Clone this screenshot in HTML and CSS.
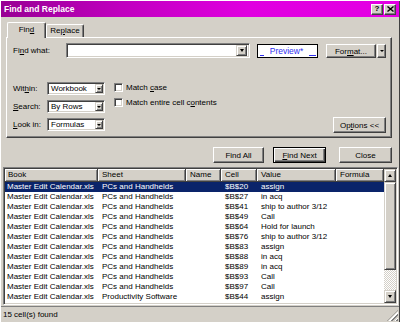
FILE: index.html
```html
<!DOCTYPE html>
<html>
<head>
<meta charset="utf-8">
<link rel="stylesheet" href="styles.css">
</head>
<body>
<div class="dialog">
  <div class="titlebar">
    <span class="title">Find and Replace</span>
    <span class="tb-btn help">?</span>
    <span class="tb-btn close"><svg width="7" height="6" viewBox="0 0 7 6"><path d="M0.5 0.5 L6.5 5.5 M6.5 0.5 L0.5 5.5" stroke="#000" stroke-width="1.4" fill="none"/></svg></span>
  </div>

  <div class="tabs">
    <div class="tab active">Fin<u>d</u></div>
    <div class="tab">Re<u>p</u>lace</div>
  </div>

  <div class="panel">
    <div class="row-what">
      <span class="lbl-what">Fi<u>n</u>d what:</span>
      <div class="combo combo-what"><span class="combo-text"></span><span class="drop"></span></div>
      <div class="preview"><span class="us us-l"></span><span>Preview*</span><span class="us us-r"></span></div>
      <div class="btn fmt">For<u>m</u>at...</div>
      <div class="btn fmt-arrow"><span class="tri"></span></div>
    </div>

    <div class="opts">
      <div class="selects">
        <div class="sel-row"><span class="lbl-sel">Wit<u>h</u>in:</span><div class="combo combo-sel"><span class="combo-text">Workbook</span><span class="drop"></span></div></div>
        <div class="sel-row"><span class="lbl-sel"><u>S</u>earch:</span><div class="combo combo-sel"><span class="combo-text">By Rows</span><span class="drop"></span></div></div>
        <div class="sel-row"><span class="lbl-sel"><u>L</u>ook in:</span><div class="combo combo-sel"><span class="combo-text">Formulas</span><span class="drop"></span></div></div>
      </div>
      <div class="checks">
        <div class="chk-row"><span class="chk"></span><span>Match <u>c</u>ase</span></div>
        <div class="chk-row"><span class="chk"></span><span>Match entire cell c<u>o</u>ntents</span></div>
      </div>
      <div class="btn opt-btn">Op<u>t</u>ions &lt;&lt;</div>
    </div>
  </div>

  <div class="actions">
    <div class="btn act findall">Find All</div>
    <div class="btn act findnext default"><u>F</u>ind Next</div>
    <div class="btn act closebtn">Close</div>
  </div>

  <div class="list">
    <div class="table">
      <div class="hdr">
        <div class="hc c-book">Book</div>
        <div class="hc c-sheet">Sheet</div>
        <div class="hc c-name">Name</div>
        <div class="hc c-cell">Cell</div>
        <div class="hc c-value">Value</div>
        <div class="hc c-formula">Formula</div>
      </div>
      <div class="rows">
        <div class="row sel"><span class="c-book">Master Edit Calendar.xls</span><span class="c-sheet">PCs and Handhelds</span><span class="c-name"></span><span class="c-cell">$B$20</span><span class="c-value">assign</span><span class="c-formula"></span></div>
        <div class="row"><span class="c-book">Master Edit Calendar.xls</span><span class="c-sheet">PCs and Handhelds</span><span class="c-name"></span><span class="c-cell">$B$27</span><span class="c-value">in acq</span><span class="c-formula"></span></div>
        <div class="row"><span class="c-book">Master Edit Calendar.xls</span><span class="c-sheet">PCs and Handhelds</span><span class="c-name"></span><span class="c-cell">$B$41</span><span class="c-value">ship to author 3/12</span><span class="c-formula"></span></div>
        <div class="row"><span class="c-book">Master Edit Calendar.xls</span><span class="c-sheet">PCs and Handhelds</span><span class="c-name"></span><span class="c-cell">$B$49</span><span class="c-value">Call</span><span class="c-formula"></span></div>
        <div class="row"><span class="c-book">Master Edit Calendar.xls</span><span class="c-sheet">PCs and Handhelds</span><span class="c-name"></span><span class="c-cell">$B$64</span><span class="c-value">Hold for launch</span><span class="c-formula"></span></div>
        <div class="row"><span class="c-book">Master Edit Calendar.xls</span><span class="c-sheet">PCs and Handhelds</span><span class="c-name"></span><span class="c-cell">$B$76</span><span class="c-value">ship to author 3/12</span><span class="c-formula"></span></div>
        <div class="row"><span class="c-book">Master Edit Calendar.xls</span><span class="c-sheet">PCs and Handhelds</span><span class="c-name"></span><span class="c-cell">$B$83</span><span class="c-value">assign</span><span class="c-formula"></span></div>
        <div class="row"><span class="c-book">Master Edit Calendar.xls</span><span class="c-sheet">PCs and Handhelds</span><span class="c-name"></span><span class="c-cell">$B$88</span><span class="c-value">in acq</span><span class="c-formula"></span></div>
        <div class="row"><span class="c-book">Master Edit Calendar.xls</span><span class="c-sheet">PCs and Handhelds</span><span class="c-name"></span><span class="c-cell">$B$89</span><span class="c-value">in acq</span><span class="c-formula"></span></div>
        <div class="row"><span class="c-book">Master Edit Calendar.xls</span><span class="c-sheet">PCs and Handhelds</span><span class="c-name"></span><span class="c-cell">$B$93</span><span class="c-value">Call</span><span class="c-formula"></span></div>
        <div class="row"><span class="c-book">Master Edit Calendar.xls</span><span class="c-sheet">PCs and Handhelds</span><span class="c-name"></span><span class="c-cell">$B$97</span><span class="c-value">Call</span><span class="c-formula"></span></div>
        <div class="row"><span class="c-book">Master Edit Calendar.xls</span><span class="c-sheet">Productivity Software</span><span class="c-name"></span><span class="c-cell">$B$44</span><span class="c-value">assign</span><span class="c-formula"></span></div>
      </div>
    </div>
    <div class="vscroll">
      <div class="sb-btn"><span class="tri up"></span></div>
      <div class="sb-thumb"></div>
      <div class="sb-track"></div>
      <div class="sb-btn"><span class="tri"></span></div>
    </div>
  </div>

  <div class="status">
    <span class="status-text">15 cell(s) found</span>
    <span class="grip"></span>
  </div>
</div>
</body>
</html>
```

FILE: styles.css
```css
* { box-sizing: border-box; }
html, body { margin: 0; padding: 0; }
body {
  width: 400px;
  height: 322px;
  overflow: hidden;
  background: #d4d0c8;
  font-family: "Liberation Sans", Arial, sans-serif;
  font-size: 8px;
  color: #000;
}
u { text-decoration: underline; text-underline-offset: 1px; }

.dialog {
  width: 400px;
  height: 322px;
  background: #d4d0c8;
  display: flex;
  flex-direction: column;
  padding: 1px 1px 0 1px;
  box-shadow: inset 1px 1px #ffffff, inset -1px 0 #404040;
}

/* title bar */
.titlebar {
  height: 16px;
  flex: none;
  display: flex;
  align-items: center;
  background: linear-gradient(90deg, #980094 0%, #c000bf 30%, #e000e0 62%, #e400e4 100%);
  padding-left: 3px;
  padding-right: 3px;
}
.title {
  color: #fff;
  font-weight: bold;
  font-size: 8.5px;
  flex: 1;
}
.tb-btn {
  width: 12px;
  height: 11px;
  background: #d4d0c8;
  border: 1px solid;
  border-color: #fff #404040 #404040 #fff;
  box-shadow: inset -1px -1px #808080;
  display: flex;
  align-items: center;
  justify-content: center;
  font-weight: bold;
  font-size: 8px;
  line-height: 1;
}
.tb-btn.help { margin-right: 1px; }

/* tabs */
.tabs {
  height: 15px;
  margin-top: 5px;
  padding-left: 6px;
  display: flex;
  align-items: flex-end;
  flex: none;
  position: relative;
  z-index: 2;
}
.tab {
  height: 13px;
  width: 38px;
  border-left: 1px solid #fff;
  border-top: 1px solid #fff;
  border-right: 1px solid #404040;
  box-shadow: inset -1px 0 #808080;
  border-radius: 2px 2px 0 0;
  text-align: center;
  line-height: 12px;
  background: #d4d0c8;
}
.tab.active {
  height: 16px;
  width: 39px;
  margin-bottom: -1px;
  line-height: 14px;
}

/* panel */
.panel {
  height: 101px;
  margin: 0 7px 0 5px;
  flex: none;
  border-left: 1px solid #fff;
  border-top: 1px solid #fff;
  border-right: 1px solid #404040;
  border-bottom: 1px solid #404040;
  box-shadow: inset -1px -1px #808080;
  padding: 5px 5px 0 6px;
  position: relative;
  z-index: 1;
}
.row-what {
  display: flex;
  align-items: flex-start;
  height: 15px;
}
.lbl-what {
  width: 53px;
  line-height: 15px;
}
.combo {
  background: #fff;
  border: 1px solid;
  border-color: #808080 #fff #fff #808080;
  box-shadow: inset 1px 1px #404040, inset -1px -1px #d4d0c8;
  display: flex;
  align-items: center;
  padding: 2px;
}
.combo-text { flex: 1; padding-left: 1px; white-space: nowrap; }
.combo-what { width: 184px; height: 15px; }
.drop {
  width: 11px;
  height: 11px;
  background: #d4d0c8;
  border: 1px solid;
  border-color: #d4d0c8 #404040 #404040 #d4d0c8;
  box-shadow: inset 1px 1px #fff, inset -1px -1px #808080;
  display: flex;
  align-items: center;
  justify-content: center;
  flex: none;
}
.drop::after, .tri {
  content: "";
  display: block;
  width: 0;
  height: 0;
  border-left: 2.5px solid transparent;
  border-right: 2.5px solid transparent;
  border-top: 3px solid #000;
}
.tri.up {
  border-top: none;
  border-bottom: 3px solid #000;
}
.preview {
  width: 61px;
  height: 14px;
  margin-left: 7px;
  margin-top: 1px;
  background: #fff;
  border: 1px solid #000;
  color: #2f2ff0;
  display: flex;
  justify-content: space-between;
  align-items: center;
  padding: 0 1px 1px 2px;
  font-size: 8.5px;
}
.preview .us {
  align-self: flex-end;
  height: 1px;
  background: #2f2ff0;
}
.us-l { width: 4px; }
.us-r { width: 7px; }

.btn {
  background: #d4d0c8;
  border: 1px solid;
  border-color: #fff #404040 #404040 #fff;
  box-shadow: inset -1px -1px #808080;
  display: flex;
  align-items: center;
  justify-content: center;
  white-space: nowrap;
}
.fmt { width: 50px; height: 14px; margin-left: 8px; margin-top: 1px; }
.fmt-arrow { width: 9px; height: 14px; margin-left: 1px; margin-top: 1px; }
.fmt-arrow .tri { border-left-width: 2px; border-right-width: 2px; border-top-width: 2px; }

.opts {
  display: flex;
  align-items: flex-start;
  margin-top: 24px;
}
.selects {
  display: flex;
  flex-direction: column;
  gap: 5px;
}
.sel-row { display: flex; align-items: center; height: 13px; }
.lbl-sel { width: 34px; }
.combo-sel { width: 58px; height: 13px; padding: 2px 1px 2px 2px; }
.combo-sel .drop { width: 8px; height: 9px; }
.combo-sel .drop::after { border-left-width: 2px; border-right-width: 2px; border-top-width: 2px; }

.checks {
  margin-left: 9px;
  margin-top: 1px;
  display: flex;
  flex-direction: column;
  gap: 6px;
}
.chk-row { display: flex; align-items: center; height: 9px; gap: 3px; white-space: nowrap; }
.chk {
  width: 9px;
  height: 9px;
  background: #fff;
  border: 1px solid;
  border-color: #808080 #fff #fff #808080;
  box-shadow: inset 1px 1px #404040, inset -1px -1px #d4d0c8;
  flex: none;
}
.opt-btn {
  width: 53px;
  height: 16px;
  margin-left: auto;
  margin-top: 35px;
}

/* action buttons */
.actions {
  display: flex;
  justify-content: flex-end;
  margin-top: 9px;
  padding-right: 7px;
  flex: none;
}
.act { height: 16px; }
.findall { width: 51px; }
.findnext { width: 53px; margin-left: 9px; }
.closebtn { width: 53px; margin-left: 13px; }
.btn.default {
  border: 1px solid #000;
  box-shadow: inset 1px 1px #fff, inset -1px -1px #404040, inset -2px -2px #808080;
}

/* results list */
.list {
  margin-top: 4px;
  margin-left: 2px;
  width: 395px;
  height: 138px;
  flex: none;
  display: flex;
  border: 1px solid;
  border-color: #808080 #fff #fff #808080;
  box-shadow: inset 1px 1px #404040, inset -1px -1px #d4d0c8;
  padding: 1px;
  background: #fff;
}
.table { width: 379px; display: flex; flex-direction: column; }
.hdr {
  display: grid;
  grid-template-columns: 93px 88px 35px 36px 79px 48px;
  height: 13px;
  background: #d4d0c8;
}
.hc {
  border-right: 1px solid #404040;
  border-bottom: 1px solid #404040;
  box-shadow: inset 1px 1px #fff, inset -1px -1px #808080;
  padding-left: 3px;
  line-height: 12px;
  white-space: nowrap;
  overflow: hidden;
}
.hc.c-sheet, .hc.c-name, .hc.c-cell, .hc.c-value, .hc.c-formula { padding-left: 4px; }
.rows { display: flex; flex-direction: column; }
.row {
  display: grid;
  grid-template-columns: 93px 88px 35px 36px 79px 48px;
  height: 10px;
  line-height: 10px;
  white-space: nowrap;
}
.row span { padding-left: 4px; overflow: hidden; }
.row .c-book { padding-left: 2px; }
.row.sel { background: #0a246a; color: #fff; }

.vscroll {
  width: 12px;
  display: flex;
  flex-direction: column;
}
.sb-btn {
  height: 13px;
  background: #d4d0c8;
  border: 1px solid;
  border-color: #d4d0c8 #404040 #404040 #d4d0c8;
  box-shadow: inset 1px 1px #fff, inset -1px -1px #808080;
  display: flex;
  align-items: center;
  justify-content: center;
  flex: none;
}
.sb-thumb {
  height: 88px;
  flex: none;
  background: #d4d0c8;
  border: 1px solid;
  border-color: #d4d0c8 #404040 #404040 #d4d0c8;
  box-shadow: inset 1px 1px #fff, inset -1px -1px #808080;
}
.sb-track {
  flex: 1;
  background: repeating-conic-gradient(#ffffff 0 25%, #d4d0c8 0 50%) 0 0 / 2px 2px;
}

/* status bar */
.status {
  flex: 1;
  display: flex;
  align-items: center;
  margin-top: 1px;
  border-top: 1px solid #808080;
  padding-left: 2px;
  position: relative;
}
.status-text { flex: 1; }
.grip {
  width: 11px;
  height: 11px;
  align-self: flex-end;
  margin-right: 1px;
  margin-bottom: 1px;
  background: repeating-linear-gradient(135deg, transparent 0 1px, #ffffff 1px 2px, #808080 2px 4px);
  clip-path: polygon(100% 0, 100% 100%, 0 100%);
}
```
